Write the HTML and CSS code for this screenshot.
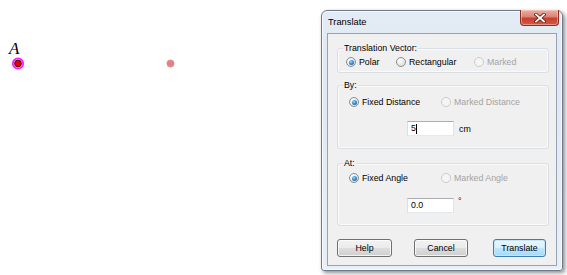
FILE: index.html
```html
<!DOCTYPE html>
<html>
<head>
<meta charset="utf-8">
<link rel="stylesheet" href="styles.css">
</head>
<body>
<div class="desktop">
  <svg class="canvas" width="300" height="275" viewBox="0 0 300 275">
    <text x="9" y="54" class="ptlabel">A</text>
    <circle cx="18" cy="63.5" r="5.2" fill="#f7d4f7" stroke="#ff1cff" stroke-width="1.8"/>
    <circle cx="18" cy="63.5" r="3.4" fill="#e20000" stroke="#3a0000" stroke-width="0.9"/>
    <circle cx="170.5" cy="63.5" r="3.6" fill="#f07b7b" stroke="#c49a9a" stroke-width="0.8"/>
  </svg>

  <div class="window">
    <div class="titlebar">
      <span class="title">Translate</span>
      <div class="closebtn">
        <svg width="12" height="10" viewBox="0 0 12 10">
          <path d="M2 1.5 L10 8.5 M10 1.5 L2 8.5" stroke="#5a1a14" stroke-width="3.4" stroke-linecap="square"/>
          <path d="M2 1.5 L10 8.5 M10 1.5 L2 8.5" stroke="#ffffff" stroke-width="1.8" stroke-linecap="square"/>
        </svg>
      </div>
    </div>
    <div class="client">
      <div class="group g1">
        <span class="legend">Translation Vector:</span>
        <div class="row">
          <label class="opt w-polar"><span class="radio checked"></span>Polar</label>
          <label class="opt w-rect"><span class="radio"></span>Rectangular</label>
          <label class="opt disabled"><span class="radio"></span>Marked</label>
        </div>
      </div>

      <div class="group g2">
        <span class="legend">By:</span>
        <div class="row wide">
          <label class="opt w-fixed"><span class="radio checked"></span>Fixed Distance</label>
          <label class="opt disabled"><span class="radio"></span>Marked Distance</label>
        </div>
        <div class="valrow">
          <div class="field">5<span class="caret"></span></div>
          <span class="unit">cm</span>
        </div>
      </div>

      <div class="group g3">
        <span class="legend">At:</span>
        <div class="row wide">
          <label class="opt w-fixed"><span class="radio checked"></span>Fixed Angle</label>
          <label class="opt disabled"><span class="radio"></span>Marked Angle</label>
        </div>
        <div class="valrow">
          <div class="field">0.0</div>
          <span class="unit deg">°</span>
        </div>
      </div>

      <div class="buttons">
        <button class="btn b-help">Help</button>
        <button class="btn b-cancel">Cancel</button>
        <button class="btn b-ok default">Translate</button>
      </div>
    </div>
  </div>
</div>
</body>
</html>
```

FILE: styles.css
```css
html, body {
  margin: 0;
  padding: 0;
  background: #ffffff;
}

.desktop {
  position: relative;
  width: 567px;
  height: 275px;
  overflow: hidden;
  font-family: "Liberation Sans", Arial, sans-serif;
  font-size: 8.8px;
  color: #000;
}

.canvas {
  position: absolute;
  left: 0;
  top: 0;
}

.ptlabel {
  font-family: "Liberation Serif", "Times New Roman", serif;
  font-style: italic;
  font-size: 17px;
  fill: #000;
}

.window {
  position: absolute;
  left: 321px;
  top: 10px;
  width: 242px;
  height: 261px;
  box-sizing: border-box;
  border: 1px solid #6f7a88;
  border-radius: 6px 6px 3px 3px;
  background: linear-gradient(180deg, #e3ebf5 0%, #dfe8f3 30%, #e9eff7 100%);
  box-shadow: 2px 2px 4px rgba(0, 0, 0, 0.45), inset 0 0 0 1px rgba(255, 255, 255, 0.7);
  display: flex;
  flex-direction: column;
}

.titlebar {
  height: 22px;
  display: flex;
  align-items: flex-start;
  justify-content: space-between;
}

.title {
  margin-left: 6px;
  margin-top: 6px;
  font-size: 9.3px;
  line-height: 11px;
  color: #000;
}

.closebtn {
  width: 39px;
  height: 16px;
  margin-right: 3px;
  margin-top: -1px;
  box-sizing: border-box;
  border: 1px solid #8b2e25;
  border-top: none;
  border-radius: 0 0 4px 4px;
  background: linear-gradient(180deg, #eab0a6 0%, #dc8274 45%, #c6402f 55%, #d35a46 100%);
  display: flex;
  align-items: center;
  justify-content: center;
  box-shadow: inset 0 0 0 1px rgba(255, 220, 210, 0.45);
}

.client {
  margin: 0 5px 4px 5px;
  flex: 1;
  box-sizing: border-box;
  border: 1px solid #97a3b2;
  background: #f0f0f0;
  padding: 14px 7px 0 9px;
  display: flex;
  flex-direction: column;
}

.group {
  position: relative;
  border: 1px solid #d9dfe4;
  border-radius: 3px;
  box-shadow: inset 0 0 0 1px #fafafa;
  box-sizing: border-box;
}

.legend {
  position: absolute;
  left: 5px;
  top: -6px;
  line-height: 11px;
  padding: 0 1px;
  background: #f0f0f0;
}

.g1 {
  height: 25px;
  padding: 7px 0 0 8px;
}

.g2 {
  margin-top: 12px;
  height: 64px;
  padding: 10px 0 0 11px;
}

.g3 {
  margin-top: 14px;
  height: 63px;
  padding: 8px 0 0 11px;
}

.row {
  display: flex;
  align-items: center;
  height: 12px;
}

.opt {
  display: flex;
  align-items: center;
  gap: 2px;
  line-height: 12px;
  white-space: nowrap;
}

.w-polar { width: 50px; }
.w-rect { width: 78px; }
.w-fixed { width: 92px; }

.opt.disabled {
  color: #a3a3a3;
}

.radio {
  position: relative;
  width: 10px;
  height: 10px;
  box-sizing: border-box;
  border-radius: 50%;
  border: 1px solid #8c8f93;
  background: radial-gradient(circle at 35% 30%, #ffffff 0%, #e9e9e9 50%, #d2d2d2 100%);
  flex: none;
  margin-right: 1px;
}

.radio.checked::after {
  content: "";
  position: absolute;
  left: 1.5px;
  top: 1.5px;
  width: 5px;
  height: 5px;
  border-radius: 50%;
  background: radial-gradient(circle at 40% 35%, #9fdcff 0%, #3a8fd0 45%, #1b4f86 100%);
}

.disabled .radio {
  border-color: #cbcbcb;
  background: #f5f5f5;
}

.valrow {
  display: flex;
  align-items: center;
  margin-top: 13px;
  margin-left: 58px;
  gap: 5px;
}

.g3 .valrow {
  margin-top: 14px;
}

.field {
  width: 47px;
  height: 15px;
  box-sizing: border-box;
  border: 1px solid #abadb3;
  border-color: #abadb3 #e2e3ea #e3e9ef #dbdfe6;
  background: #fff;
  padding-left: 3px;
  line-height: 13px;
  display: flex;
  align-items: center;
}

.caret {
  display: inline-block;
  width: 1px;
  height: 10px;
  background: #000;
}

.unit.deg {
  align-self: flex-start;
  margin-top: -2px;
  margin-left: -1px;
}

.buttons {
  display: flex;
  margin-top: 13px;
}

.btn {
  height: 18px;
  box-sizing: border-box;
  border: 1px solid #707070;
  border-radius: 3px;
  background: linear-gradient(180deg, #f2f2f2 0%, #ebebeb 48%, #dddddd 52%, #cfcfcf 100%);
  box-shadow: inset 0 0 0 1px rgba(255, 255, 255, 0.75);
  font-family: inherit;
  font-size: 8.8px;
  color: #000;
  padding: 0;
  line-height: 14px;
}

.b-help { width: 55px; }
.b-cancel { width: 54px; margin-left: 22px; }
.b-ok { width: 53px; margin-left: 25px; }

.btn.default {
  border-color: #3c7fb1;
  background: linear-gradient(180deg, #eaf6fd 0%, #d9f0fc 48%, #bee6fd 52%, #a7d9f5 100%);
  box-shadow: inset 0 0 0 1px #c6e5f7;
}
```
